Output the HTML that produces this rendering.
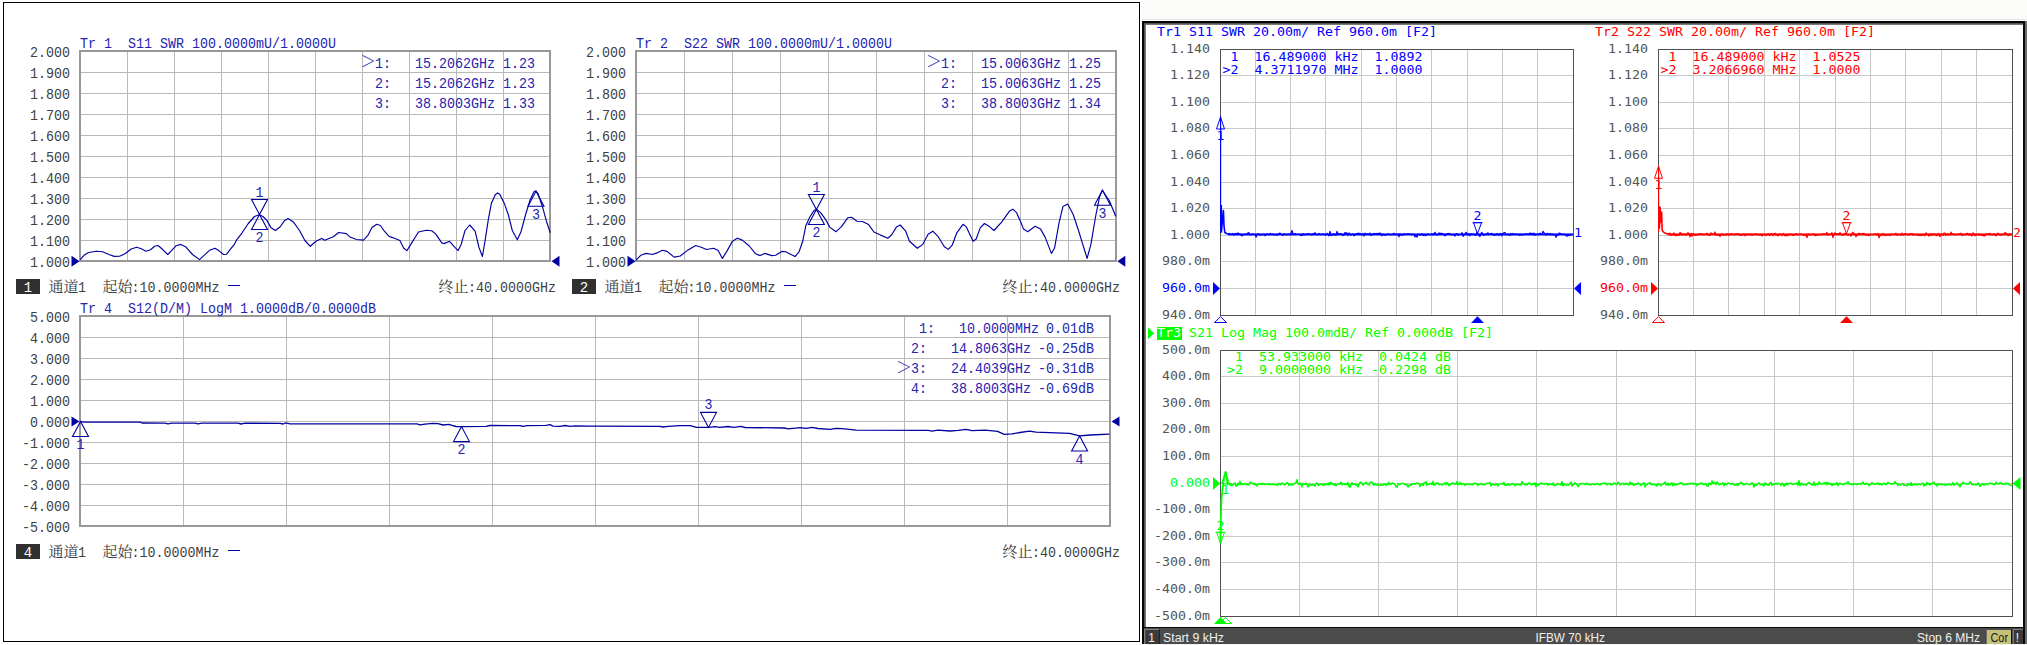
<!DOCTYPE html>
<html lang="zh">
<head>
<meta charset="utf-8">
<title>VNA traces</title>
<style>
html,body{margin:0;padding:0;background:#fff;}
body{width:2027px;height:645px;overflow:hidden;}
svg{display:block;}
text{white-space:pre;}
.lm{font-family:"Liberation Mono",monospace;font-size:15.5px;}
.cj{font-family:"Liberation Serif","Noto Serif CJK SC",serif;font-size:15px;}
.rm{font-family:"DejaVu Sans Mono","Liberation Mono",monospace;font-size:11.8px;}
.sb{font-family:"Liberation Sans",sans-serif;font-size:12px;}
</style>
</head>
<body>
<svg width="2027" height="645" viewBox="0 0 2027 645">
<rect x="0" y="0" width="2027" height="645" fill="#ffffff"/>
<g shape-rendering="crispEdges">
<rect x="3" y="2" width="1137" height="1" fill="#000"/>
<rect x="3" y="641" width="1137" height="1" fill="#000"/>
<rect x="3" y="2" width="1" height="640" fill="#000"/>
<rect x="1139" y="2" width="1" height="640" fill="#000"/>
<rect x="127" y="51" width="1" height="210" fill="#b9b9b9"/>
<rect x="174" y="51" width="1" height="210" fill="#b9b9b9"/>
<rect x="221" y="51" width="1" height="210" fill="#b9b9b9"/>
<rect x="268" y="51" width="1" height="210" fill="#b9b9b9"/>
<rect x="315" y="51" width="1" height="210" fill="#b9b9b9"/>
<rect x="362" y="51" width="1" height="210" fill="#b9b9b9"/>
<rect x="409" y="51" width="1" height="210" fill="#b9b9b9"/>
<rect x="456" y="51" width="1" height="210" fill="#b9b9b9"/>
<rect x="503" y="51" width="1" height="210" fill="#b9b9b9"/>
<rect x="80" y="72" width="470" height="1" fill="#b9b9b9"/>
<rect x="80" y="93" width="470" height="1" fill="#b9b9b9"/>
<rect x="80" y="114" width="470" height="1" fill="#b9b9b9"/>
<rect x="80" y="135" width="470" height="1" fill="#b9b9b9"/>
<rect x="80" y="156" width="470" height="1" fill="#b9b9b9"/>
<rect x="80" y="177" width="470" height="1" fill="#b9b9b9"/>
<rect x="80" y="198" width="470" height="1" fill="#b9b9b9"/>
<rect x="80" y="219" width="470" height="1" fill="#b9b9b9"/>
<rect x="80" y="240" width="470" height="1" fill="#b9b9b9"/>
<rect x="79" y="50" width="472" height="2" fill="#989898"/>
<rect x="79" y="260" width="472" height="2" fill="#989898"/>
<rect x="79" y="50" width="2" height="212" fill="#989898"/>
<rect x="549" y="50" width="2" height="212" fill="#989898"/>
<rect x="684" y="51" width="1" height="210" fill="#b9b9b9"/>
<rect x="732" y="51" width="1" height="210" fill="#b9b9b9"/>
<rect x="780" y="51" width="1" height="210" fill="#b9b9b9"/>
<rect x="828" y="51" width="1" height="210" fill="#b9b9b9"/>
<rect x="876" y="51" width="1" height="210" fill="#b9b9b9"/>
<rect x="924" y="51" width="1" height="210" fill="#b9b9b9"/>
<rect x="972" y="51" width="1" height="210" fill="#b9b9b9"/>
<rect x="1020" y="51" width="1" height="210" fill="#b9b9b9"/>
<rect x="1068" y="51" width="1" height="210" fill="#b9b9b9"/>
<rect x="636" y="72" width="480" height="1" fill="#b9b9b9"/>
<rect x="636" y="93" width="480" height="1" fill="#b9b9b9"/>
<rect x="636" y="114" width="480" height="1" fill="#b9b9b9"/>
<rect x="636" y="135" width="480" height="1" fill="#b9b9b9"/>
<rect x="636" y="156" width="480" height="1" fill="#b9b9b9"/>
<rect x="636" y="177" width="480" height="1" fill="#b9b9b9"/>
<rect x="636" y="198" width="480" height="1" fill="#b9b9b9"/>
<rect x="636" y="219" width="480" height="1" fill="#b9b9b9"/>
<rect x="636" y="240" width="480" height="1" fill="#b9b9b9"/>
<rect x="635" y="50" width="482" height="2" fill="#989898"/>
<rect x="635" y="260" width="482" height="2" fill="#989898"/>
<rect x="635" y="50" width="2" height="212" fill="#989898"/>
<rect x="1115" y="50" width="2" height="212" fill="#989898"/>
<rect x="183" y="316" width="1" height="210" fill="#b9b9b9"/>
<rect x="286" y="316" width="1" height="210" fill="#b9b9b9"/>
<rect x="389" y="316" width="1" height="210" fill="#b9b9b9"/>
<rect x="492" y="316" width="1" height="210" fill="#b9b9b9"/>
<rect x="595" y="316" width="1" height="210" fill="#b9b9b9"/>
<rect x="698" y="316" width="1" height="210" fill="#b9b9b9"/>
<rect x="801" y="316" width="1" height="210" fill="#b9b9b9"/>
<rect x="904" y="316" width="1" height="210" fill="#b9b9b9"/>
<rect x="1007" y="316" width="1" height="210" fill="#b9b9b9"/>
<rect x="80" y="337" width="1030" height="1" fill="#b9b9b9"/>
<rect x="80" y="358" width="1030" height="1" fill="#b9b9b9"/>
<rect x="80" y="379" width="1030" height="1" fill="#b9b9b9"/>
<rect x="80" y="400" width="1030" height="1" fill="#b9b9b9"/>
<rect x="80" y="421" width="1030" height="1" fill="#b9b9b9"/>
<rect x="80" y="442" width="1030" height="1" fill="#b9b9b9"/>
<rect x="80" y="463" width="1030" height="1" fill="#b9b9b9"/>
<rect x="80" y="484" width="1030" height="1" fill="#b9b9b9"/>
<rect x="80" y="505" width="1030" height="1" fill="#b9b9b9"/>
<rect x="79" y="315" width="1032" height="2" fill="#989898"/>
<rect x="79" y="525" width="1032" height="2" fill="#989898"/>
<rect x="79" y="315" width="2" height="212" fill="#989898"/>
<rect x="1109" y="315" width="2" height="212" fill="#989898"/>
<rect x="16" y="279" width="24" height="15" fill="#303030"/>
<rect x="572" y="279" width="24" height="15" fill="#303030"/>
<rect x="16" y="544" width="24" height="15" fill="#303030"/>
</g>
<text class="lm" x="30" y="56.8" fill="#404040" textLength="40" lengthAdjust="spacingAndGlyphs" xml:space="preserve">2.000</text>
<text class="lm" x="586" y="56.8" fill="#404040" textLength="40" lengthAdjust="spacingAndGlyphs" xml:space="preserve">2.000</text>
<text class="lm" x="30" y="77.8" fill="#404040" textLength="40" lengthAdjust="spacingAndGlyphs" xml:space="preserve">1.900</text>
<text class="lm" x="586" y="77.8" fill="#404040" textLength="40" lengthAdjust="spacingAndGlyphs" xml:space="preserve">1.900</text>
<text class="lm" x="30" y="98.8" fill="#404040" textLength="40" lengthAdjust="spacingAndGlyphs" xml:space="preserve">1.800</text>
<text class="lm" x="586" y="98.8" fill="#404040" textLength="40" lengthAdjust="spacingAndGlyphs" xml:space="preserve">1.800</text>
<text class="lm" x="30" y="119.8" fill="#404040" textLength="40" lengthAdjust="spacingAndGlyphs" xml:space="preserve">1.700</text>
<text class="lm" x="586" y="119.8" fill="#404040" textLength="40" lengthAdjust="spacingAndGlyphs" xml:space="preserve">1.700</text>
<text class="lm" x="30" y="140.8" fill="#404040" textLength="40" lengthAdjust="spacingAndGlyphs" xml:space="preserve">1.600</text>
<text class="lm" x="586" y="140.8" fill="#404040" textLength="40" lengthAdjust="spacingAndGlyphs" xml:space="preserve">1.600</text>
<text class="lm" x="30" y="161.8" fill="#404040" textLength="40" lengthAdjust="spacingAndGlyphs" xml:space="preserve">1.500</text>
<text class="lm" x="586" y="161.8" fill="#404040" textLength="40" lengthAdjust="spacingAndGlyphs" xml:space="preserve">1.500</text>
<text class="lm" x="30" y="182.8" fill="#404040" textLength="40" lengthAdjust="spacingAndGlyphs" xml:space="preserve">1.400</text>
<text class="lm" x="586" y="182.8" fill="#404040" textLength="40" lengthAdjust="spacingAndGlyphs" xml:space="preserve">1.400</text>
<text class="lm" x="30" y="203.8" fill="#404040" textLength="40" lengthAdjust="spacingAndGlyphs" xml:space="preserve">1.300</text>
<text class="lm" x="586" y="203.8" fill="#404040" textLength="40" lengthAdjust="spacingAndGlyphs" xml:space="preserve">1.300</text>
<text class="lm" x="30" y="224.8" fill="#404040" textLength="40" lengthAdjust="spacingAndGlyphs" xml:space="preserve">1.200</text>
<text class="lm" x="586" y="224.8" fill="#404040" textLength="40" lengthAdjust="spacingAndGlyphs" xml:space="preserve">1.200</text>
<text class="lm" x="30" y="245.8" fill="#404040" textLength="40" lengthAdjust="spacingAndGlyphs" xml:space="preserve">1.100</text>
<text class="lm" x="586" y="245.8" fill="#404040" textLength="40" lengthAdjust="spacingAndGlyphs" xml:space="preserve">1.100</text>
<text class="lm" x="30" y="266.8" fill="#404040" textLength="40" lengthAdjust="spacingAndGlyphs" xml:space="preserve">1.000</text>
<text class="lm" x="586" y="266.8" fill="#404040" textLength="40" lengthAdjust="spacingAndGlyphs" xml:space="preserve">1.000</text>
<text class="lm" x="30" y="321.8" fill="#404040" textLength="40" lengthAdjust="spacingAndGlyphs" xml:space="preserve">5.000</text>
<text class="lm" x="30" y="342.8" fill="#404040" textLength="40" lengthAdjust="spacingAndGlyphs" xml:space="preserve">4.000</text>
<text class="lm" x="30" y="363.8" fill="#404040" textLength="40" lengthAdjust="spacingAndGlyphs" xml:space="preserve">3.000</text>
<text class="lm" x="30" y="384.8" fill="#404040" textLength="40" lengthAdjust="spacingAndGlyphs" xml:space="preserve">2.000</text>
<text class="lm" x="30" y="405.8" fill="#404040" textLength="40" lengthAdjust="spacingAndGlyphs" xml:space="preserve">1.000</text>
<text class="lm" x="30" y="426.8" fill="#404040" textLength="40" lengthAdjust="spacingAndGlyphs" xml:space="preserve">0.000</text>
<text class="lm" x="22" y="447.8" fill="#404040" textLength="48" lengthAdjust="spacingAndGlyphs" xml:space="preserve">-1.000</text>
<text class="lm" x="22" y="468.8" fill="#404040" textLength="48" lengthAdjust="spacingAndGlyphs" xml:space="preserve">-2.000</text>
<text class="lm" x="22" y="489.8" fill="#404040" textLength="48" lengthAdjust="spacingAndGlyphs" xml:space="preserve">-3.000</text>
<text class="lm" x="22" y="510.8" fill="#404040" textLength="48" lengthAdjust="spacingAndGlyphs" xml:space="preserve">-4.000</text>
<text class="lm" x="22" y="531.8" fill="#404040" textLength="48" lengthAdjust="spacingAndGlyphs" xml:space="preserve">-5.000</text>
<text class="lm" x="80" y="48" fill="#2424b0" textLength="256" lengthAdjust="spacingAndGlyphs" xml:space="preserve">Tr 1  S11 SWR 100.0000mU/1.0000U</text>
<text class="lm" x="636" y="48" fill="#2424b0" textLength="256" lengthAdjust="spacingAndGlyphs" xml:space="preserve">Tr 2  S22 SWR 100.0000mU/1.0000U</text>
<text class="lm" x="80" y="313" fill="#2424b0" textLength="296" lengthAdjust="spacingAndGlyphs" xml:space="preserve">Tr 4  S12(D/M) LogM 1.0000dB/0.0000dB</text>
<text class="lm" x="375" y="67.5" fill="#2424b0" textLength="16" lengthAdjust="spacingAndGlyphs" xml:space="preserve">1:</text>
<text class="lm" x="415" y="67.5" fill="#2424b0" textLength="80" lengthAdjust="spacingAndGlyphs" xml:space="preserve">15.2062GHz</text>
<text class="lm" x="503" y="67.5" fill="#2424b0" textLength="32" lengthAdjust="spacingAndGlyphs" xml:space="preserve">1.23</text>
<text class="lm" x="375" y="87.5" fill="#2424b0" textLength="16" lengthAdjust="spacingAndGlyphs" xml:space="preserve">2:</text>
<text class="lm" x="415" y="87.5" fill="#2424b0" textLength="80" lengthAdjust="spacingAndGlyphs" xml:space="preserve">15.2062GHz</text>
<text class="lm" x="503" y="87.5" fill="#2424b0" textLength="32" lengthAdjust="spacingAndGlyphs" xml:space="preserve">1.23</text>
<text class="lm" x="375" y="107.5" fill="#2424b0" textLength="16" lengthAdjust="spacingAndGlyphs" xml:space="preserve">3:</text>
<text class="lm" x="415" y="107.5" fill="#2424b0" textLength="80" lengthAdjust="spacingAndGlyphs" xml:space="preserve">38.8003GHz</text>
<text class="lm" x="503" y="107.5" fill="#2424b0" textLength="32" lengthAdjust="spacingAndGlyphs" xml:space="preserve">1.33</text>
<text class="cj" x="360.2" y="67" fill="#2424b0" style="font-size:16px">＞</text>
<text class="lm" x="941" y="67.5" fill="#2424b0" textLength="16" lengthAdjust="spacingAndGlyphs" xml:space="preserve">1:</text>
<text class="lm" x="981" y="67.5" fill="#2424b0" textLength="80" lengthAdjust="spacingAndGlyphs" xml:space="preserve">15.0063GHz</text>
<text class="lm" x="1069" y="67.5" fill="#2424b0" textLength="32" lengthAdjust="spacingAndGlyphs" xml:space="preserve">1.25</text>
<text class="lm" x="941" y="87.5" fill="#2424b0" textLength="16" lengthAdjust="spacingAndGlyphs" xml:space="preserve">2:</text>
<text class="lm" x="981" y="87.5" fill="#2424b0" textLength="80" lengthAdjust="spacingAndGlyphs" xml:space="preserve">15.0063GHz</text>
<text class="lm" x="1069" y="87.5" fill="#2424b0" textLength="32" lengthAdjust="spacingAndGlyphs" xml:space="preserve">1.25</text>
<text class="lm" x="941" y="107.5" fill="#2424b0" textLength="16" lengthAdjust="spacingAndGlyphs" xml:space="preserve">3:</text>
<text class="lm" x="981" y="107.5" fill="#2424b0" textLength="80" lengthAdjust="spacingAndGlyphs" xml:space="preserve">38.8003GHz</text>
<text class="lm" x="1069" y="107.5" fill="#2424b0" textLength="32" lengthAdjust="spacingAndGlyphs" xml:space="preserve">1.34</text>
<text class="cj" x="925.9" y="67" fill="#2424b0" style="font-size:16px">＞</text>
<text class="lm" x="919" y="333" fill="#2424b0" textLength="16" lengthAdjust="spacingAndGlyphs" xml:space="preserve">1:</text>
<text class="lm" x="959" y="333" fill="#2424b0" textLength="80" lengthAdjust="spacingAndGlyphs" xml:space="preserve">10.0000MHz</text>
<text class="lm" x="1046" y="333" fill="#2424b0" textLength="48" lengthAdjust="spacingAndGlyphs" xml:space="preserve">0.01dB</text>
<text class="lm" x="911" y="353" fill="#2424b0" textLength="16" lengthAdjust="spacingAndGlyphs" xml:space="preserve">2:</text>
<text class="lm" x="951" y="353" fill="#2424b0" textLength="80" lengthAdjust="spacingAndGlyphs" xml:space="preserve">14.8063GHz</text>
<text class="lm" x="1038" y="353" fill="#2424b0" textLength="56" lengthAdjust="spacingAndGlyphs" xml:space="preserve">-0.25dB</text>
<text class="lm" x="911" y="373" fill="#2424b0" textLength="16" lengthAdjust="spacingAndGlyphs" xml:space="preserve">3:</text>
<text class="lm" x="951" y="373" fill="#2424b0" textLength="80" lengthAdjust="spacingAndGlyphs" xml:space="preserve">24.4039GHz</text>
<text class="lm" x="1038" y="373" fill="#2424b0" textLength="56" lengthAdjust="spacingAndGlyphs" xml:space="preserve">-0.31dB</text>
<text class="lm" x="911" y="393" fill="#2424b0" textLength="16" lengthAdjust="spacingAndGlyphs" xml:space="preserve">4:</text>
<text class="lm" x="951" y="393" fill="#2424b0" textLength="80" lengthAdjust="spacingAndGlyphs" xml:space="preserve">38.8003GHz</text>
<text class="lm" x="1038" y="393" fill="#2424b0" textLength="56" lengthAdjust="spacingAndGlyphs" xml:space="preserve">-0.69dB</text>
<text class="cj" x="896" y="372.5" fill="#2424b0" style="font-size:16px">＞</text>
<text class="lm" x="28" y="291.5" fill="#fff" text-anchor="middle" style="font-size:14px">1</text>
<text class="cj" x="48.5" y="292" fill="#404040">通道</text>
<text class="lm" x="78" y="292" fill="#404040" textLength="8" lengthAdjust="spacingAndGlyphs" xml:space="preserve">1</text>
<text class="cj" x="102.5" y="292" fill="#404040">起始</text>
<text class="lm" x="131.5" y="292" fill="#404040" textLength="88" lengthAdjust="spacingAndGlyphs" xml:space="preserve">:10.0000MHz</text>
<rect x="228" y="285" width="12" height="1" fill="#0000a0" shape-rendering="crispEdges"/>
<text class="cj" x="438.5" y="292" fill="#404040">终止</text>
<text class="lm" x="468" y="292" fill="#404040" textLength="88" lengthAdjust="spacingAndGlyphs" xml:space="preserve">:40.0000GHz</text>
<text class="lm" x="584" y="291.5" fill="#fff" text-anchor="middle" style="font-size:14px">2</text>
<text class="cj" x="604.5" y="292" fill="#404040">通道</text>
<text class="lm" x="634" y="292" fill="#404040" textLength="8" lengthAdjust="spacingAndGlyphs" xml:space="preserve">1</text>
<text class="cj" x="658.5" y="292" fill="#404040">起始</text>
<text class="lm" x="687.5" y="292" fill="#404040" textLength="88" lengthAdjust="spacingAndGlyphs" xml:space="preserve">:10.0000MHz</text>
<rect x="784" y="285" width="12" height="1" fill="#0000a0" shape-rendering="crispEdges"/>
<text class="cj" x="1002.5" y="292" fill="#404040">终止</text>
<text class="lm" x="1032" y="292" fill="#404040" textLength="88" lengthAdjust="spacingAndGlyphs" xml:space="preserve">:40.0000GHz</text>
<text class="lm" x="28" y="556.5" fill="#fff" text-anchor="middle" style="font-size:14px">4</text>
<text class="cj" x="48.5" y="557" fill="#404040">通道</text>
<text class="lm" x="78" y="557" fill="#404040" textLength="8" lengthAdjust="spacingAndGlyphs" xml:space="preserve">1</text>
<text class="cj" x="102.5" y="557" fill="#404040">起始</text>
<text class="lm" x="131.5" y="557" fill="#404040" textLength="88" lengthAdjust="spacingAndGlyphs" xml:space="preserve">:10.0000MHz</text>
<rect x="228" y="550" width="12" height="1" fill="#0000a0" shape-rendering="crispEdges"/>
<text class="cj" x="1002.5" y="557" fill="#404040">终止</text>
<text class="lm" x="1032" y="557" fill="#404040" textLength="88" lengthAdjust="spacingAndGlyphs" xml:space="preserve">:40.0000GHz</text>
<polyline points="80.1,259.9 84.0,255.3 88.6,252.5 96.4,251.2 102.6,251.7 108.8,254.5 114.2,256.4 119.6,256.2 125.0,253.7 131.2,249.0 136.7,247.2 141.3,248.8 146.0,251.2 150.6,249.8 154.5,246.3 158.0,245.5 163.0,249.8 167.7,254.5 171.6,250.6 176.2,245.7 180.9,244.4 185.5,246.7 192.5,254.5 199.5,259.6 204.1,255.3 209.5,250.3 215.0,248.3 218.8,250.6 223.5,254.5 226.6,254.2 230.5,249.1 234.3,244.4 236.7,239.8 242.1,232.8 248.3,223.5 254.5,216.5 259.1,214.7 263.0,216.5 266.9,220.4 270.8,227.4 275.4,230.5 280.0,227.0 284.7,220.4 288.1,218.4 293.3,221.9 299.5,230.5 304.9,240.5 310.3,246.3 316.3,241.0 321.7,238.4 324.8,240.3 333.3,236.7 338.7,232.5 346.4,233.6 349.5,236.7 356.5,239.5 363.5,240.1 368.1,235.1 372.0,227.4 376.7,224.3 380.5,225.5 384.4,231.2 389.1,236.4 394.5,238.2 399.9,240.5 403.8,248.3 406.9,250.6 410.8,244.4 418.5,232.0 426.3,230.2 431.7,230.8 435.6,233.9 441.8,242.9 444.1,243.6 449.5,241.3 454.2,246.7 458.1,250.6 461.2,244.4 465.0,230.5 469.7,225.0 475.1,231.2 479.0,247.5 482.4,256.5 485.2,239.8 488.3,219.6 491.4,203.3 495.3,194.8 497.6,192.9 499.9,194.5 504.6,204.1 508.4,215.0 512.3,230.5 517.3,239.8 520.9,232.0 525.5,215.0 530.2,199.5 534.0,191.7 535.6,190.9 537.9,193.3 542.6,207.2 546.4,221.2 550.3,232.8" fill="none" stroke="#0000a0" stroke-width="1.15" stroke-linejoin="round" />
<polyline points="636.1,260.2 640.7,255.3 646.2,253.4 652.4,254.5 657.0,252.9 662.4,250.3 667.1,251.4 674.1,257.1 680.3,256.0 687.2,250.6 695.8,245.5 701.2,247.2 706.6,249.5 713.6,248.3 718.2,250.6 722.4,258.4 726.8,251.4 732.2,241.6 737.3,238.2 742.3,240.1 749.3,246.0 755.5,253.7 760.1,255.6 764.8,253.4 771.7,255.6 775.6,255.3 781.8,251.4 785.7,251.7 789.6,253.7 795.0,256.5 798.9,252.2 802.7,241.3 805.8,225.8 809.7,217.3 813.6,211.1 816.4,209.2 820.6,212.6 825.2,218.8 829.9,227.4 836.1,231.7 841.5,226.6 847.7,217.8 851.6,217.3 857.0,221.2 862.4,221.5 868.6,224.6 873.9,232.0 880.6,235.1 887.8,238.2 891.7,234.8 896.4,227.1 900.2,225.0 905.7,231.2 909.5,241.3 917.3,248.3 922.7,244.4 928.1,234.3 932.8,231.2 938.2,236.7 944.4,246.7 948.3,249.4 952.2,245.2 956.8,232.8 963.0,224.3 966.1,226.6 973.1,241.3 976.2,239.0 980.1,228.1 984.4,223.5 989.4,226.6 994.0,230.5 1001.8,221.9 1009.5,211.1 1012.9,209.2 1016.5,212.6 1020.4,221.2 1023.5,228.9 1027.8,231.7 1035.1,226.3 1040.5,228.9 1045.2,237.4 1051.4,253.4 1054.5,248.3 1059.1,222.7 1063.0,206.4 1067.7,204.1 1073.1,214.2 1078.5,230.5 1087.1,258.4 1090.9,244.4 1095.6,216.5 1099.5,197.1 1102.2,190.2 1109.5,201.0 1115.7,216.2" fill="none" stroke="#0000a0" stroke-width="1.15" stroke-linejoin="round" />
<polyline points="80.0,421.3 84.0,422.1 140.0,422.2 142.0,423.0 165.0,423.1 168.0,423.8 172.0,423.1 195.0,423.1 198.0,423.9 202.0,423.1 238.0,423.2 241.0,424.0 245.0,423.2 280.0,423.3 283.0,424.0 286.0,422.9 290.0,423.8 417.0,423.9 420.0,424.9 425.0,424.2 433.0,423.4 438.0,423.6 443.0,425.0 449.0,424.3 452.0,425.4 456.0,426.5 461.4,426.6 486.0,426.4 490.0,425.5 520.0,425.6 523.0,426.4 527.0,425.6 546.0,425.3 550.0,424.6 553.0,426.1 560.0,426.3 565.0,425.5 570.0,426.4 575.0,425.8 590.0,426.1 660.0,426.3 663.0,427.0 668.0,426.4 680.0,425.7 690.0,425.6 696.6,427.4 708.5,427.4 715.0,426.6 720.0,427.4 728.0,426.5 734.0,427.4 741.0,426.4 745.0,427.5 784.5,428.0 788.0,428.8 800.0,427.7 806.0,428.4 812.0,427.4 818.0,428.5 830.0,429.3 836.0,428.4 842.0,428.6 856.4,430.1 928.3,430.4 932.0,431.2 938.0,430.2 950.0,431.0 958.0,430.4 966.0,429.4 972.0,430.6 985.0,430.2 997.6,431.4 1004.2,434.3 1012.0,433.9 1020.0,432.5 1029.5,431.1 1036.0,432.2 1069.5,433.3 1079.6,435.9 1090.0,435.0 1109.4,434.1" fill="none" stroke="#0000a0" stroke-width="1.3" stroke-linejoin="round" />
<polygon points="259.5,214.5 251.5,199.5 267.5,199.5" fill="none" stroke="#0000a0" stroke-width="1.1" />
<text class="lm" x="255.5" y="196.5" fill="#2424b0" textLength="8" lengthAdjust="spacingAndGlyphs" xml:space="preserve">1</text>
<polygon points="259.5,214.5 251.5,229.5 267.5,229.5" fill="none" stroke="#0000a0" stroke-width="1.1" />
<text class="lm" x="255.5" y="242.0" fill="#2424b0" textLength="8" lengthAdjust="spacingAndGlyphs" xml:space="preserve">2</text>
<polygon points="536.0,191.2 528.0,206.2 544.0,206.2" fill="none" stroke="#0000a0" stroke-width="1.1" />
<text class="lm" x="532" y="218.7" fill="#2424b0" textLength="8" lengthAdjust="spacingAndGlyphs" xml:space="preserve">3</text>
<polygon points="816.4,209.5 808.4,194.5 824.4,194.5" fill="none" stroke="#0000a0" stroke-width="1.1" />
<text class="lm" x="812.4" y="191.5" fill="#2424b0" textLength="8" lengthAdjust="spacingAndGlyphs" xml:space="preserve">1</text>
<polygon points="816.4,209.5 808.4,224.5 824.4,224.5" fill="none" stroke="#0000a0" stroke-width="1.1" />
<text class="lm" x="812.4" y="237.0" fill="#2424b0" textLength="8" lengthAdjust="spacingAndGlyphs" xml:space="preserve">2</text>
<polygon points="1102.5,190.2 1094.5,205.2 1110.5,205.2" fill="none" stroke="#0000a0" stroke-width="1.1" />
<text class="lm" x="1098.5" y="217.7" fill="#2424b0" textLength="8" lengthAdjust="spacingAndGlyphs" xml:space="preserve">3</text>
<polygon points="80.5,421.5 72.5,436.5 88.5,436.5" fill="none" stroke="#0000a0" stroke-width="1.1" />
<text class="lm" x="76.5" y="449.0" fill="#2424b0" textLength="8" lengthAdjust="spacingAndGlyphs" xml:space="preserve">1</text>
<polygon points="461.5,426.6 453.5,441.6 469.5,441.6" fill="none" stroke="#0000a0" stroke-width="1.1" />
<text class="lm" x="457.5" y="454.1" fill="#2424b0" textLength="8" lengthAdjust="spacingAndGlyphs" xml:space="preserve">2</text>
<polygon points="708.5,427.4 700.5,412.4 716.5,412.4" fill="none" stroke="#0000a0" stroke-width="1.1" />
<text class="lm" x="704.5" y="409.4" fill="#2424b0" textLength="8" lengthAdjust="spacingAndGlyphs" xml:space="preserve">3</text>
<polygon points="1079.6,436.0 1071.6,451.0 1087.6,451.0" fill="none" stroke="#0000a0" stroke-width="1.1" />
<text class="lm" x="1075.6" y="463.5" fill="#2424b0" textLength="8" lengthAdjust="spacingAndGlyphs" xml:space="preserve">4</text>
<polygon points="79.5,261.3 71.5,255.8 71.5,266.8" fill="#0000a0" stroke="none" stroke-width="1" />
<polygon points="551.5,261.3 559.5,255.8 559.5,266.8" fill="#0000a0" stroke="none" stroke-width="1" />
<polygon points="635.5,261.3 627.5,255.8 627.5,266.8" fill="#0000a0" stroke="none" stroke-width="1" />
<polygon points="1117.3,261.3 1125.3,255.8 1125.3,266.8" fill="#0000a0" stroke="none" stroke-width="1" />
<polygon points="79.5,421.5 71.5,416.5 71.5,426.5" fill="#0000a0" stroke="none" stroke-width="1" />
<polygon points="1111.5,421.5 1119.5,416.5 1119.5,426.5" fill="#0000a0" stroke="none" stroke-width="1" />
<g shape-rendering="crispEdges">
<rect x="1142" y="0" width="885" height="21" fill="#fcfcfa"/>
<rect x="1142" y="19" width="885" height="1" fill="#e6e6e6"/>
<rect x="1142" y="20" width="885" height="1" fill="#ffffff"/>
<rect x="1142" y="21" width="885" height="624" fill="#ffffff"/>
<rect x="1142" y="21" width="885" height="2" fill="#050505"/>
<rect x="1144" y="23" width="879" height="1" fill="#555555"/>
<rect x="1144" y="24" width="879" height="1" fill="#787878"/>
<rect x="1142" y="21" width="2" height="623" fill="#050505"/>
<rect x="1144" y="23" width="1" height="604" fill="#555555"/>
<rect x="1145" y="24" width="1" height="603" fill="#787878"/>
<rect x="2023" y="21" width="2" height="623" fill="#0a0a0a"/>
<rect x="2025" y="21" width="2" height="623" fill="#6e6e6e"/>
<rect x="1144" y="627" width="879" height="1" fill="#080808"/>
<rect x="1144" y="628" width="879" height="16" fill="#4b4b4b"/>
<rect x="1142" y="644" width="885" height="1" fill="#f4f4f4"/>
<rect x="1146" y="629" width="13" height="15" fill="#3a3a3a"/>
<rect x="1144" y="629" width="1" height="15" fill="#808080"/>
<rect x="1144" y="629" width="15" height="1" fill="#808080"/>
<rect x="1159" y="629" width="1" height="15" fill="#222"/>
<rect x="1986" y="629" width="1" height="15" fill="#6a6a6a"/>
<rect x="1987" y="630" width="24" height="14" fill="#c6c17a"/>
<rect x="2011" y="629" width="1" height="15" fill="#151515"/>
<rect x="2013" y="629" width="1" height="15" fill="#7a7a7a"/>
<rect x="2013" y="629" width="10" height="1" fill="#7a7a7a"/>
<rect x="2014" y="630" width="9" height="14" fill="#3a3a3a"/>
<rect x="1255" y="49" width="1" height="266" fill="#c9c9c9"/>
<rect x="1290" y="49" width="1" height="266" fill="#c9c9c9"/>
<rect x="1325" y="49" width="1" height="266" fill="#c9c9c9"/>
<rect x="1361" y="49" width="1" height="266" fill="#c9c9c9"/>
<rect x="1396" y="49" width="1" height="266" fill="#c9c9c9"/>
<rect x="1431" y="49" width="1" height="266" fill="#c9c9c9"/>
<rect x="1467" y="49" width="1" height="266" fill="#c9c9c9"/>
<rect x="1502" y="49" width="1" height="266" fill="#c9c9c9"/>
<rect x="1537" y="49" width="1" height="266" fill="#c9c9c9"/>
<rect x="1220" y="75" width="353" height="1" fill="#c9c9c9"/>
<rect x="1220" y="102" width="353" height="1" fill="#c9c9c9"/>
<rect x="1220" y="128" width="353" height="1" fill="#c9c9c9"/>
<rect x="1220" y="155" width="353" height="1" fill="#c9c9c9"/>
<rect x="1220" y="182" width="353" height="1" fill="#c9c9c9"/>
<rect x="1220" y="208" width="353" height="1" fill="#c9c9c9"/>
<rect x="1220" y="235" width="353" height="1" fill="#c9c9c9"/>
<rect x="1220" y="261" width="353" height="1" fill="#c9c9c9"/>
<rect x="1220" y="288" width="353" height="1" fill="#c9c9c9"/>
<rect x="1220" y="49" width="354" height="1" fill="#505050"/>
<rect x="1220" y="315" width="354" height="1" fill="#505050"/>
<rect x="1220" y="49" width="1" height="267" fill="#505050"/>
<rect x="1573" y="49" width="1" height="267" fill="#505050"/>
<rect x="1693" y="49" width="1" height="266" fill="#c9c9c9"/>
<rect x="1728" y="49" width="1" height="266" fill="#c9c9c9"/>
<rect x="1764" y="49" width="1" height="266" fill="#c9c9c9"/>
<rect x="1799" y="49" width="1" height="266" fill="#c9c9c9"/>
<rect x="1835" y="49" width="1" height="266" fill="#c9c9c9"/>
<rect x="1870" y="49" width="1" height="266" fill="#c9c9c9"/>
<rect x="1905" y="49" width="1" height="266" fill="#c9c9c9"/>
<rect x="1941" y="49" width="1" height="266" fill="#c9c9c9"/>
<rect x="1976" y="49" width="1" height="266" fill="#c9c9c9"/>
<rect x="1658" y="75" width="354" height="1" fill="#c9c9c9"/>
<rect x="1658" y="102" width="354" height="1" fill="#c9c9c9"/>
<rect x="1658" y="128" width="354" height="1" fill="#c9c9c9"/>
<rect x="1658" y="155" width="354" height="1" fill="#c9c9c9"/>
<rect x="1658" y="182" width="354" height="1" fill="#c9c9c9"/>
<rect x="1658" y="208" width="354" height="1" fill="#c9c9c9"/>
<rect x="1658" y="235" width="354" height="1" fill="#c9c9c9"/>
<rect x="1658" y="261" width="354" height="1" fill="#c9c9c9"/>
<rect x="1658" y="288" width="354" height="1" fill="#c9c9c9"/>
<rect x="1658" y="49" width="355" height="1" fill="#505050"/>
<rect x="1658" y="315" width="355" height="1" fill="#505050"/>
<rect x="1658" y="49" width="1" height="267" fill="#505050"/>
<rect x="2012" y="49" width="1" height="267" fill="#505050"/>
<rect x="1299" y="350" width="1" height="266" fill="#c9c9c9"/>
<rect x="1378" y="350" width="1" height="266" fill="#c9c9c9"/>
<rect x="1457" y="350" width="1" height="266" fill="#c9c9c9"/>
<rect x="1536" y="350" width="1" height="266" fill="#c9c9c9"/>
<rect x="1616" y="350" width="1" height="266" fill="#c9c9c9"/>
<rect x="1695" y="350" width="1" height="266" fill="#c9c9c9"/>
<rect x="1774" y="350" width="1" height="266" fill="#c9c9c9"/>
<rect x="1853" y="350" width="1" height="266" fill="#c9c9c9"/>
<rect x="1932" y="350" width="1" height="266" fill="#c9c9c9"/>
<rect x="1220" y="376" width="792" height="1" fill="#c9c9c9"/>
<rect x="1220" y="403" width="792" height="1" fill="#c9c9c9"/>
<rect x="1220" y="429" width="792" height="1" fill="#c9c9c9"/>
<rect x="1220" y="456" width="792" height="1" fill="#c9c9c9"/>
<rect x="1220" y="483" width="792" height="1" fill="#c9c9c9"/>
<rect x="1220" y="509" width="792" height="1" fill="#c9c9c9"/>
<rect x="1220" y="536" width="792" height="1" fill="#c9c9c9"/>
<rect x="1220" y="562" width="792" height="1" fill="#c9c9c9"/>
<rect x="1220" y="589" width="792" height="1" fill="#c9c9c9"/>
<rect x="1220" y="350" width="793" height="1" fill="#505050"/>
<rect x="1220" y="616" width="793" height="1" fill="#505050"/>
<rect x="1220" y="350" width="1" height="267" fill="#505050"/>
<rect x="2012" y="350" width="1" height="267" fill="#505050"/>
<rect x="1157" y="327" width="25" height="13" fill="#00ff00"/>
</g>
<text class="sb" x="1148.3" y="642" fill="#f0f0f0">1</text>
<text class="sb" x="1163" y="642" fill="#f0f0f0" textLength="61" lengthAdjust="spacingAndGlyphs">Start 9 kHz</text>
<text class="sb" x="1535.5" y="642" fill="#f0f0f0" textLength="69.5" lengthAdjust="spacingAndGlyphs">IFBW 70 kHz</text>
<text class="sb" x="1917" y="642" fill="#f0f0f0" textLength="63" lengthAdjust="spacingAndGlyphs">Stop 6 MHz</text>
<text class="sb" x="1990.5" y="642" fill="#1a1a1a" textLength="17.5" lengthAdjust="spacingAndGlyphs">Cor</text>
<text class="sb" x="2015.8" y="642" fill="#f0f0f0">!</text>
<text class="rm" x="1157" y="36" fill="#0000ff" textLength="280" lengthAdjust="spacingAndGlyphs" xml:space="preserve">Tr1 S11 SWR 20.00m/ Ref 960.0m [F2]</text>
<text class="rm" x="1595" y="36" fill="#ff0000" textLength="280" lengthAdjust="spacingAndGlyphs" xml:space="preserve">Tr2 S22 SWR 20.00m/ Ref 960.0m [F2]</text>
<text class="rm" x="1157" y="337" fill="#ffffff" textLength="24" lengthAdjust="spacingAndGlyphs" xml:space="preserve">Tr3</text>
<text class="rm" x="1189" y="337" fill="#00ff00" textLength="304" lengthAdjust="spacingAndGlyphs" xml:space="preserve">S21 Log Mag 100.0mdB/ Ref 0.000dB [F2]</text>
<polygon points="1148.0,327.3 1154.0,333.3 1148.0,339.3" fill="#00ff00" stroke="none" stroke-width="1" />
<text class="rm" x="1170" y="52.8" fill="#555555" textLength="40" lengthAdjust="spacingAndGlyphs" xml:space="preserve">1.140</text>
<text class="rm" x="1608" y="52.8" fill="#555555" textLength="40" lengthAdjust="spacingAndGlyphs" xml:space="preserve">1.140</text>
<text class="rm" x="1170" y="78.8" fill="#555555" textLength="40" lengthAdjust="spacingAndGlyphs" xml:space="preserve">1.120</text>
<text class="rm" x="1608" y="78.8" fill="#555555" textLength="40" lengthAdjust="spacingAndGlyphs" xml:space="preserve">1.120</text>
<text class="rm" x="1170" y="105.8" fill="#555555" textLength="40" lengthAdjust="spacingAndGlyphs" xml:space="preserve">1.100</text>
<text class="rm" x="1608" y="105.8" fill="#555555" textLength="40" lengthAdjust="spacingAndGlyphs" xml:space="preserve">1.100</text>
<text class="rm" x="1170" y="131.8" fill="#555555" textLength="40" lengthAdjust="spacingAndGlyphs" xml:space="preserve">1.080</text>
<text class="rm" x="1608" y="131.8" fill="#555555" textLength="40" lengthAdjust="spacingAndGlyphs" xml:space="preserve">1.080</text>
<text class="rm" x="1170" y="158.8" fill="#555555" textLength="40" lengthAdjust="spacingAndGlyphs" xml:space="preserve">1.060</text>
<text class="rm" x="1608" y="158.8" fill="#555555" textLength="40" lengthAdjust="spacingAndGlyphs" xml:space="preserve">1.060</text>
<text class="rm" x="1170" y="185.8" fill="#555555" textLength="40" lengthAdjust="spacingAndGlyphs" xml:space="preserve">1.040</text>
<text class="rm" x="1608" y="185.8" fill="#555555" textLength="40" lengthAdjust="spacingAndGlyphs" xml:space="preserve">1.040</text>
<text class="rm" x="1170" y="211.8" fill="#555555" textLength="40" lengthAdjust="spacingAndGlyphs" xml:space="preserve">1.020</text>
<text class="rm" x="1608" y="211.8" fill="#555555" textLength="40" lengthAdjust="spacingAndGlyphs" xml:space="preserve">1.020</text>
<text class="rm" x="1170" y="238.8" fill="#555555" textLength="40" lengthAdjust="spacingAndGlyphs" xml:space="preserve">1.000</text>
<text class="rm" x="1608" y="238.8" fill="#555555" textLength="40" lengthAdjust="spacingAndGlyphs" xml:space="preserve">1.000</text>
<text class="rm" x="1162" y="264.8" fill="#555555" textLength="48" lengthAdjust="spacingAndGlyphs" xml:space="preserve">980.0m</text>
<text class="rm" x="1600" y="264.8" fill="#555555" textLength="48" lengthAdjust="spacingAndGlyphs" xml:space="preserve">980.0m</text>
<text class="rm" x="1162" y="291.8" fill="#0000ff" textLength="48" lengthAdjust="spacingAndGlyphs" xml:space="preserve">960.0m</text>
<text class="rm" x="1600" y="291.8" fill="#ff0000" textLength="48" lengthAdjust="spacingAndGlyphs" xml:space="preserve">960.0m</text>
<text class="rm" x="1162" y="318.8" fill="#555555" textLength="48" lengthAdjust="spacingAndGlyphs" xml:space="preserve">940.0m</text>
<text class="rm" x="1600" y="318.8" fill="#555555" textLength="48" lengthAdjust="spacingAndGlyphs" xml:space="preserve">940.0m</text>
<text class="rm" x="1162" y="353.8" fill="#555555" textLength="48" lengthAdjust="spacingAndGlyphs" xml:space="preserve">500.0m</text>
<text class="rm" x="1162" y="379.8" fill="#555555" textLength="48" lengthAdjust="spacingAndGlyphs" xml:space="preserve">400.0m</text>
<text class="rm" x="1162" y="406.8" fill="#555555" textLength="48" lengthAdjust="spacingAndGlyphs" xml:space="preserve">300.0m</text>
<text class="rm" x="1162" y="432.8" fill="#555555" textLength="48" lengthAdjust="spacingAndGlyphs" xml:space="preserve">200.0m</text>
<text class="rm" x="1162" y="459.8" fill="#555555" textLength="48" lengthAdjust="spacingAndGlyphs" xml:space="preserve">100.0m</text>
<text class="rm" x="1170" y="486.8" fill="#00ff00" textLength="40" lengthAdjust="spacingAndGlyphs" xml:space="preserve">0.000</text>
<text class="rm" x="1154" y="512.8" fill="#555555" textLength="56" lengthAdjust="spacingAndGlyphs" xml:space="preserve">-100.0m</text>
<text class="rm" x="1154" y="539.8" fill="#555555" textLength="56" lengthAdjust="spacingAndGlyphs" xml:space="preserve">-200.0m</text>
<text class="rm" x="1154" y="565.8" fill="#555555" textLength="56" lengthAdjust="spacingAndGlyphs" xml:space="preserve">-300.0m</text>
<text class="rm" x="1154" y="592.8" fill="#555555" textLength="56" lengthAdjust="spacingAndGlyphs" xml:space="preserve">-400.0m</text>
<text class="rm" x="1154" y="619.8" fill="#555555" textLength="56" lengthAdjust="spacingAndGlyphs" xml:space="preserve">-500.0m</text>
<text class="rm" x="1222.6" y="60.5" fill="#0000ff" textLength="200" lengthAdjust="spacingAndGlyphs" xml:space="preserve"> 1  16.489000 kHz  1.0892</text>
<text class="rm" x="1222.6" y="73.7" fill="#0000ff" textLength="200" lengthAdjust="spacingAndGlyphs" xml:space="preserve">&gt;2  4.3711970 MHz  1.0000</text>
<text class="rm" x="1660.6" y="60.5" fill="#ff0000" textLength="200" lengthAdjust="spacingAndGlyphs" xml:space="preserve"> 1  16.489000 kHz  1.0525</text>
<text class="rm" x="1660.6" y="73.7" fill="#ff0000" textLength="200" lengthAdjust="spacingAndGlyphs" xml:space="preserve">&gt;2  3.2066960 MHz  1.0000</text>
<text class="rm" x="1227" y="361" fill="#00ff00" textLength="224" lengthAdjust="spacingAndGlyphs" xml:space="preserve"> 1  53.933000 kHz  0.0424 dB</text>
<text class="rm" x="1227" y="374.3" fill="#00ff00" textLength="224" lengthAdjust="spacingAndGlyphs" xml:space="preserve">&gt;2  9.0000000 kHz -0.2298 dB</text>
<polyline points="1220.6,233.0 1220.6,116.5" fill="none" stroke="#0000ff" stroke-width="1.2" stroke-linejoin="round" />
<polyline points="1221.3,205.0 1221.4,232.0 1222.3,222.0 1223.4,210.5 1224.0,226.0 1224.8,232.5 1227.0,233.8 1230.0,234.3" fill="none" stroke="#0000ff" stroke-width="1.6" stroke-linejoin="round" />
<rect x="1228" y="233.45" width="345" height="1.9" fill="#0000ff"/>
<polyline points="1228.0,233.5 1229.0,234.7 1230.0,233.5 1231.0,234.4 1232.0,234.7 1233.0,233.5 1234.0,235.2 1235.0,233.8 1236.0,233.3 1237.0,234.7 1238.0,232.8 1239.0,234.2 1240.0,234.0 1241.0,235.2 1242.0,235.9 1243.0,234.5 1244.0,234.7 1245.0,234.3 1246.0,234.2 1247.0,234.4 1248.0,232.8 1249.0,232.7 1250.0,235.0 1251.0,234.6 1252.0,234.0 1253.0,234.2 1254.0,234.4 1255.0,234.5 1256.0,237.1 1257.0,235.2 1258.0,233.7 1259.0,234.1 1260.0,235.1 1261.0,235.1 1262.0,234.5 1263.0,234.9 1264.0,233.9 1265.0,235.8 1266.0,235.0 1267.0,233.6 1268.0,234.5 1269.0,234.9 1270.0,233.3 1271.0,234.7 1272.0,234.1 1273.0,234.1 1274.0,234.9 1275.0,234.9 1276.0,234.5 1277.0,235.4 1278.0,233.8 1279.0,233.8 1280.0,233.1 1281.0,234.4 1282.0,234.5 1283.0,235.5 1284.0,233.9 1285.0,234.1 1286.0,234.9 1287.0,234.6 1288.0,234.0 1289.0,234.0 1290.0,235.0 1291.0,233.1 1292.0,230.5 1293.0,234.0 1294.0,233.8 1295.0,233.5 1296.0,234.5 1297.0,234.4 1298.0,234.5 1299.0,234.4 1300.0,234.3 1301.0,235.7 1302.0,235.3 1303.0,233.7 1304.0,235.0 1305.0,234.1 1306.0,234.9 1307.0,233.9 1308.0,233.5 1309.0,234.0 1310.0,234.2 1311.0,234.2 1312.0,235.2 1313.0,233.6 1314.0,233.7 1315.0,232.7 1316.0,234.5 1317.0,234.5 1318.0,234.6 1319.0,233.4 1320.0,234.1 1321.0,234.7 1322.0,234.4 1323.0,233.8 1324.0,234.4 1325.0,235.1 1326.0,234.8 1327.0,233.3 1328.0,234.7 1329.0,235.9 1330.0,231.4 1331.0,235.6 1332.0,234.8 1333.0,235.1 1334.0,233.6 1335.0,234.9 1336.0,235.5 1337.0,231.4 1338.0,233.6 1339.0,233.7 1340.0,233.9 1341.0,233.7 1342.0,234.8 1343.0,235.5 1344.0,235.0 1345.0,232.5 1346.0,233.4 1347.0,232.9 1348.0,235.6 1349.0,233.1 1350.0,233.8 1351.0,235.3 1352.0,234.4 1353.0,233.7 1354.0,235.8 1355.0,235.2 1356.0,233.5 1357.0,234.7 1358.0,233.1 1359.0,233.8 1360.0,233.4 1361.0,234.6 1362.0,234.8 1363.0,233.5 1364.0,236.0 1365.0,233.2 1366.0,234.6 1367.0,233.8 1368.0,234.2 1369.0,234.6 1370.0,233.0 1371.0,235.4 1372.0,235.1 1373.0,234.0 1374.0,233.4 1375.0,234.3 1376.0,233.5 1377.0,233.9 1378.0,233.2 1379.0,233.9 1380.0,232.9 1381.0,234.3 1382.0,235.8 1383.0,234.0 1384.0,235.0 1385.0,235.1 1386.0,235.1 1387.0,234.6 1388.0,233.7 1389.0,234.3 1390.0,234.8 1391.0,234.5 1392.0,234.9 1393.0,234.1 1394.0,233.2 1395.0,234.9 1396.0,234.2 1397.0,234.8 1398.0,234.0 1399.0,236.7 1400.0,233.8 1401.0,235.2 1402.0,235.0 1403.0,235.0 1404.0,233.7 1405.0,234.3 1406.0,234.0 1407.0,234.3 1408.0,233.8 1409.0,233.7 1410.0,234.7 1411.0,234.0 1412.0,234.9 1413.0,234.0 1414.0,234.9 1415.0,236.9 1416.0,234.5 1417.0,237.2 1418.0,234.3 1419.0,234.0 1420.0,235.1 1421.0,234.9 1422.0,233.7 1423.0,235.2 1424.0,235.7 1425.0,234.4 1426.0,235.6 1427.0,234.6 1428.0,233.9 1429.0,234.5 1430.0,234.7 1431.0,234.9 1432.0,233.7 1433.0,235.2 1434.0,233.7 1435.0,232.3 1436.0,234.7 1437.0,235.1 1438.0,234.5 1439.0,232.8 1440.0,234.0 1441.0,233.1 1442.0,233.7 1443.0,233.9 1444.0,234.3 1445.0,235.9 1446.0,234.7 1447.0,233.7 1448.0,234.0 1449.0,233.3 1450.0,234.4 1451.0,234.1 1452.0,235.1 1453.0,234.4 1454.0,234.6 1455.0,236.1 1456.0,233.9 1457.0,233.6 1458.0,235.4 1459.0,234.4 1460.0,234.5 1461.0,234.4 1462.0,232.6 1463.0,236.4 1464.0,235.1 1465.0,233.9 1466.0,232.3 1467.0,233.5 1468.0,235.2 1469.0,233.4 1470.0,235.8 1471.0,234.1 1472.0,233.7 1473.0,234.8 1474.0,234.1 1475.0,235.2 1476.0,235.3 1477.0,232.3 1478.0,233.9 1479.0,235.8 1480.0,236.4 1481.0,233.5 1482.0,232.5 1483.0,234.7 1484.0,235.4 1485.0,234.0 1486.0,234.8 1487.0,233.5 1488.0,232.8 1489.0,234.5 1490.0,234.0 1491.0,233.7 1492.0,233.3 1493.0,235.0 1494.0,235.5 1495.0,234.1 1496.0,235.4 1497.0,233.6 1498.0,234.3 1499.0,235.5 1500.0,233.6 1501.0,233.5 1502.0,235.9 1503.0,233.2 1504.0,232.7 1505.0,232.5 1506.0,234.7 1507.0,234.8 1508.0,234.0 1509.0,234.9 1510.0,235.3 1511.0,233.5 1512.0,235.0 1513.0,233.4 1514.0,234.1 1515.0,234.7 1516.0,233.9 1517.0,234.1 1518.0,234.8 1519.0,235.3 1520.0,234.0 1521.0,235.2 1522.0,234.7 1523.0,234.9 1524.0,234.2 1525.0,234.2 1526.0,234.2 1527.0,233.9 1528.0,234.3 1529.0,233.7 1530.0,233.0 1531.0,233.7 1532.0,233.2 1533.0,234.9 1534.0,233.1 1535.0,235.4 1536.0,234.0 1537.0,234.9 1538.0,234.0 1539.0,234.7 1540.0,233.1 1541.0,234.1 1542.0,234.5 1543.0,231.3 1544.0,232.7 1545.0,233.6 1546.0,235.2 1547.0,233.4 1548.0,233.8 1549.0,234.8 1550.0,233.4 1551.0,234.9 1552.0,234.0 1553.0,235.1 1554.0,234.2 1555.0,234.7 1556.0,237.3 1557.0,234.8 1558.0,235.1 1559.0,233.1 1560.0,233.3 1561.0,234.2 1562.0,234.1 1563.0,234.6 1564.0,234.1 1565.0,234.7 1566.0,235.8 1567.0,236.2 1568.0,235.3 1569.0,235.7 1570.0,235.2 1571.0,234.5 1572.0,234.6 1573.0,235.0" fill="none" stroke="#0000ff" stroke-width="1.25" stroke-linejoin="round" />
<polyline points="1658.6,232.0 1658.6,166.0" fill="none" stroke="#ff0000" stroke-width="1.2" stroke-linejoin="round" />
<polyline points="1659.3,206.0 1659.5,228.0 1660.1,207.5 1660.8,222.0 1661.6,212.0 1662.2,230.5 1664.0,232.5 1667.0,233.9 1670.0,234.3" fill="none" stroke="#ff0000" stroke-width="1.6" stroke-linejoin="round" />
<rect x="1668" y="233.45" width="344" height="1.9" fill="#ff0000"/>
<polyline points="1668.0,233.6 1669.0,234.5 1670.0,233.1 1671.0,235.3 1672.0,235.2 1673.0,234.1 1674.0,233.0 1675.0,235.4 1676.0,235.6 1677.0,235.2 1678.0,235.2 1679.0,235.3 1680.0,232.5 1681.0,233.2 1682.0,235.0 1683.0,234.0 1684.0,234.9 1685.0,233.9 1686.0,235.5 1687.0,233.7 1688.0,232.8 1689.0,233.8 1690.0,236.9 1691.0,233.3 1692.0,236.3 1693.0,233.7 1694.0,234.8 1695.0,235.4 1696.0,235.1 1697.0,234.6 1698.0,235.0 1699.0,234.3 1700.0,233.6 1701.0,234.4 1702.0,233.8 1703.0,234.9 1704.0,234.3 1705.0,234.3 1706.0,234.5 1707.0,233.2 1708.0,235.0 1709.0,235.2 1710.0,235.5 1711.0,232.8 1712.0,234.3 1713.0,233.8 1714.0,234.3 1715.0,232.0 1716.0,235.1 1717.0,235.1 1718.0,235.2 1719.0,234.6 1720.0,236.4 1721.0,234.8 1722.0,233.7 1723.0,235.5 1724.0,234.5 1725.0,234.8 1726.0,235.3 1727.0,233.9 1728.0,233.9 1729.0,235.5 1730.0,233.9 1731.0,234.3 1732.0,233.6 1733.0,234.7 1734.0,234.3 1735.0,234.7 1736.0,233.8 1737.0,234.3 1738.0,233.5 1739.0,234.3 1740.0,235.5 1741.0,234.4 1742.0,235.4 1743.0,234.6 1744.0,233.7 1745.0,235.8 1746.0,235.0 1747.0,233.9 1748.0,234.8 1749.0,234.0 1750.0,234.9 1751.0,234.0 1752.0,235.5 1753.0,234.4 1754.0,234.1 1755.0,234.7 1756.0,233.7 1757.0,234.6 1758.0,234.8 1759.0,234.4 1760.0,235.2 1761.0,233.9 1762.0,235.9 1763.0,235.0 1764.0,234.2 1765.0,234.7 1766.0,235.6 1767.0,234.8 1768.0,233.7 1769.0,234.9 1770.0,235.6 1771.0,233.5 1772.0,234.1 1773.0,235.8 1774.0,233.9 1775.0,233.2 1776.0,235.0 1777.0,234.2 1778.0,235.9 1779.0,234.6 1780.0,233.8 1781.0,234.7 1782.0,235.5 1783.0,233.4 1784.0,234.5 1785.0,235.8 1786.0,235.6 1787.0,235.3 1788.0,235.7 1789.0,233.9 1790.0,234.9 1791.0,233.9 1792.0,234.9 1793.0,235.3 1794.0,235.2 1795.0,234.8 1796.0,233.7 1797.0,234.0 1798.0,234.8 1799.0,234.5 1800.0,234.0 1801.0,234.3 1802.0,234.1 1803.0,235.1 1804.0,235.2 1805.0,235.3 1806.0,234.8 1807.0,237.7 1808.0,233.9 1809.0,235.0 1810.0,234.9 1811.0,234.4 1812.0,234.6 1813.0,234.2 1814.0,233.8 1815.0,235.8 1816.0,235.1 1817.0,235.2 1818.0,234.8 1819.0,234.6 1820.0,234.5 1821.0,234.8 1822.0,234.6 1823.0,233.7 1824.0,234.0 1825.0,234.1 1826.0,234.1 1827.0,232.4 1828.0,235.2 1829.0,234.2 1830.0,234.0 1831.0,234.2 1832.0,232.7 1833.0,237.5 1834.0,234.4 1835.0,232.7 1836.0,234.0 1837.0,233.9 1838.0,233.6 1839.0,234.3 1840.0,232.7 1841.0,234.2 1842.0,234.9 1843.0,235.2 1844.0,234.6 1845.0,233.2 1846.0,233.9 1847.0,234.4 1848.0,235.3 1849.0,234.6 1850.0,234.7 1851.0,236.1 1852.0,233.3 1853.0,232.3 1854.0,233.6 1855.0,234.0 1856.0,236.8 1857.0,234.9 1858.0,234.6 1859.0,233.2 1860.0,233.7 1861.0,234.4 1862.0,233.9 1863.0,233.6 1864.0,233.3 1865.0,234.6 1866.0,235.2 1867.0,235.2 1868.0,234.4 1869.0,235.6 1870.0,234.8 1871.0,234.9 1872.0,234.6 1873.0,234.5 1874.0,234.3 1875.0,233.9 1876.0,234.4 1877.0,235.2 1878.0,233.4 1879.0,237.8 1880.0,235.5 1881.0,234.4 1882.0,235.6 1883.0,233.3 1884.0,234.8 1885.0,235.6 1886.0,234.8 1887.0,235.2 1888.0,234.6 1889.0,235.2 1890.0,235.5 1891.0,234.4 1892.0,234.2 1893.0,234.6 1894.0,234.4 1895.0,234.5 1896.0,233.2 1897.0,235.4 1898.0,234.1 1899.0,234.7 1900.0,234.5 1901.0,235.3 1902.0,233.1 1903.0,234.8 1904.0,235.2 1905.0,233.7 1906.0,233.9 1907.0,234.4 1908.0,234.6 1909.0,235.1 1910.0,233.5 1911.0,234.3 1912.0,233.4 1913.0,235.4 1914.0,234.0 1915.0,234.5 1916.0,234.9 1917.0,234.8 1918.0,235.1 1919.0,235.2 1920.0,235.7 1921.0,235.0 1922.0,235.3 1923.0,235.2 1924.0,234.3 1925.0,235.7 1926.0,232.8 1927.0,234.5 1928.0,234.7 1929.0,236.0 1930.0,233.7 1931.0,235.3 1932.0,235.5 1933.0,233.7 1934.0,234.8 1935.0,233.9 1936.0,235.5 1937.0,235.5 1938.0,233.4 1939.0,235.3 1940.0,236.7 1941.0,234.2 1942.0,234.3 1943.0,235.4 1944.0,233.1 1945.0,233.2 1946.0,235.5 1947.0,234.0 1948.0,233.8 1949.0,234.8 1950.0,234.9 1951.0,232.1 1952.0,234.3 1953.0,233.9 1954.0,234.4 1955.0,234.9 1956.0,234.5 1957.0,234.4 1958.0,234.4 1959.0,234.1 1960.0,233.9 1961.0,233.2 1962.0,235.7 1963.0,234.6 1964.0,234.7 1965.0,234.8 1966.0,233.9 1967.0,233.2 1968.0,233.7 1969.0,235.2 1970.0,233.7 1971.0,235.2 1972.0,235.9 1973.0,232.9 1974.0,233.9 1975.0,235.7 1976.0,235.3 1977.0,234.6 1978.0,234.0 1979.0,235.0 1980.0,234.4 1981.0,235.4 1982.0,235.0 1983.0,235.7 1984.0,235.8 1985.0,235.9 1986.0,234.4 1987.0,233.8 1988.0,234.0 1989.0,234.0 1990.0,233.3 1991.0,234.6 1992.0,234.3 1993.0,235.0 1994.0,233.6 1995.0,235.1 1996.0,235.8 1997.0,234.4 1998.0,233.2 1999.0,234.1 2000.0,235.1 2001.0,235.2 2002.0,234.7 2003.0,233.9 2004.0,234.6 2005.0,232.4 2006.0,233.2 2007.0,234.0 2008.0,235.7 2009.0,235.4 2010.0,233.5 2011.0,234.8 2012.0,234.3" fill="none" stroke="#ff0000" stroke-width="1.25" stroke-linejoin="round" />
<polyline points="1220.5,543.5 1220.8,520.0 1221.4,500.0 1222.6,488.0 1224.0,478.0 1225.6,471.8 1226.6,478.0 1227.6,484.0 1229.0,483.8 1232.0,484.2" fill="none" stroke="#00ff00" stroke-width="1.8" stroke-linejoin="round" />
<polyline points="1230.0,484.4 1231.0,485.5 1232.0,485.5 1233.0,484.6 1234.0,484.1 1235.0,482.9 1236.0,486.2 1237.0,485.6 1238.0,483.5 1239.0,484.7 1240.0,481.3 1241.0,484.9 1242.0,483.5 1243.0,484.3 1244.0,483.9 1245.0,484.0 1246.0,484.7 1247.0,483.7 1248.0,485.0 1249.0,484.3 1250.0,482.2 1251.0,482.7 1252.0,483.8 1253.0,483.5 1254.0,484.6 1255.0,483.3 1256.0,485.0 1257.0,485.9 1258.0,483.7 1259.0,484.5 1260.0,484.2 1261.0,483.8 1262.0,484.5 1263.0,483.5 1264.0,484.2 1265.0,484.6 1266.0,483.9 1267.0,484.1 1268.0,483.7 1269.0,484.6 1270.0,484.0 1271.0,484.4 1272.0,484.7 1273.0,483.9 1274.0,484.6 1275.0,484.8 1276.0,485.0 1277.0,484.4 1278.0,485.2 1279.0,483.4 1280.0,483.4 1281.0,484.7 1282.0,483.1 1283.0,483.4 1284.0,484.5 1285.0,484.8 1286.0,483.7 1287.0,482.6 1288.0,483.1 1289.0,485.4 1290.0,484.0 1291.0,484.9 1292.0,484.0 1293.0,485.0 1294.0,484.0 1295.0,483.0 1296.0,482.6 1297.0,479.7 1298.0,483.9 1299.0,484.4 1300.0,483.3 1301.0,484.3 1302.0,486.7 1303.0,483.5 1304.0,484.1 1305.0,484.2 1306.0,483.1 1307.0,484.5 1308.0,486.9 1309.0,484.2 1310.0,484.7 1311.0,485.3 1312.0,484.3 1313.0,485.1 1314.0,484.7 1315.0,486.1 1316.0,483.5 1317.0,483.0 1318.0,485.1 1319.0,485.2 1320.0,483.7 1321.0,484.2 1322.0,484.8 1323.0,485.1 1324.0,483.7 1325.0,485.3 1326.0,484.1 1327.0,483.8 1328.0,484.9 1329.0,482.8 1330.0,484.8 1331.0,482.2 1332.0,484.0 1333.0,484.2 1334.0,485.1 1335.0,483.7 1336.0,485.6 1337.0,484.8 1338.0,483.8 1339.0,483.8 1340.0,484.2 1341.0,482.2 1342.0,484.8 1343.0,483.8 1344.0,483.6 1345.0,484.6 1346.0,483.7 1347.0,484.8 1348.0,482.7 1349.0,486.5 1350.0,487.3 1351.0,484.8 1352.0,482.6 1353.0,484.5 1354.0,484.3 1355.0,483.9 1356.0,485.4 1357.0,484.2 1358.0,486.9 1359.0,484.6 1360.0,482.3 1361.0,482.6 1362.0,483.1 1363.0,485.3 1364.0,483.8 1365.0,483.0 1366.0,482.3 1367.0,483.7 1368.0,484.3 1369.0,484.9 1370.0,482.7 1371.0,482.1 1372.0,482.2 1373.0,484.2 1374.0,485.3 1375.0,483.7 1376.0,484.6 1377.0,485.2 1378.0,484.0 1379.0,485.2 1380.0,485.4 1381.0,484.7 1382.0,484.9 1383.0,485.3 1384.0,483.8 1385.0,484.3 1386.0,485.5 1387.0,483.6 1388.0,484.6 1389.0,482.3 1390.0,484.2 1391.0,484.2 1392.0,483.3 1393.0,483.0 1394.0,483.8 1395.0,484.8 1396.0,486.5 1397.0,487.2 1398.0,483.9 1399.0,484.2 1400.0,484.4 1401.0,483.7 1402.0,483.5 1403.0,483.6 1404.0,484.0 1405.0,484.6 1406.0,484.6 1407.0,484.3 1408.0,487.1 1409.0,485.1 1410.0,484.8 1411.0,485.3 1412.0,483.8 1413.0,484.1 1414.0,483.8 1415.0,484.1 1416.0,483.4 1417.0,482.9 1418.0,483.3 1419.0,483.9 1420.0,486.5 1421.0,484.4 1422.0,483.5 1423.0,485.4 1424.0,483.0 1425.0,482.4 1426.0,481.8 1427.0,485.4 1428.0,484.1 1429.0,484.3 1430.0,483.9 1431.0,483.5 1432.0,484.7 1433.0,481.4 1434.0,485.3 1435.0,484.7 1436.0,483.0 1437.0,483.7 1438.0,483.0 1439.0,484.7 1440.0,484.5 1441.0,484.5 1442.0,484.6 1443.0,484.6 1444.0,483.9 1445.0,482.8 1446.0,484.7 1447.0,482.6 1448.0,483.6 1449.0,485.6 1450.0,484.2 1451.0,484.5 1452.0,483.0 1453.0,482.8 1454.0,484.4 1455.0,483.8 1456.0,484.3 1457.0,481.6 1458.0,484.8 1459.0,484.1 1460.0,482.5 1461.0,484.8 1462.0,483.6 1463.0,484.1 1464.0,483.7 1465.0,485.3 1466.0,484.4 1467.0,483.9 1468.0,484.5 1469.0,484.2 1470.0,483.8 1471.0,484.4 1472.0,485.0 1473.0,484.2 1474.0,483.0 1475.0,483.8 1476.0,483.4 1477.0,483.7 1478.0,485.6 1479.0,484.1 1480.0,484.3 1481.0,483.9 1482.0,484.7 1483.0,484.0 1484.0,484.7 1485.0,484.4 1486.0,483.8 1487.0,483.3 1488.0,483.5 1489.0,483.1 1490.0,482.6 1491.0,485.9 1492.0,484.7 1493.0,484.2 1494.0,485.0 1495.0,485.0 1496.0,483.8 1497.0,484.3 1498.0,486.0 1499.0,483.9 1500.0,483.8 1501.0,483.7 1502.0,483.9 1503.0,484.3 1504.0,482.4 1505.0,485.2 1506.0,485.4 1507.0,485.0 1508.0,483.6 1509.0,485.2 1510.0,484.7 1511.0,484.4 1512.0,483.8 1513.0,484.0 1514.0,483.9 1515.0,485.6 1516.0,485.0 1517.0,484.0 1518.0,484.6 1519.0,484.6 1520.0,484.8 1521.0,484.9 1522.0,481.5 1523.0,483.9 1524.0,484.5 1525.0,484.4 1526.0,483.9 1527.0,484.9 1528.0,484.0 1529.0,482.9 1530.0,483.2 1531.0,484.8 1532.0,484.5 1533.0,483.6 1534.0,484.5 1535.0,482.8 1536.0,486.8 1537.0,483.5 1538.0,485.1 1539.0,484.5 1540.0,483.8 1541.0,482.7 1542.0,484.3 1543.0,483.7 1544.0,483.6 1545.0,484.5 1546.0,483.7 1547.0,483.5 1548.0,485.2 1549.0,483.8 1550.0,484.0 1551.0,484.3 1552.0,484.9 1553.0,483.0 1554.0,485.5 1555.0,485.0 1556.0,485.2 1557.0,484.3 1558.0,483.3 1559.0,484.1 1560.0,484.2 1561.0,484.9 1562.0,481.8 1563.0,485.9 1564.0,483.6 1565.0,484.9 1566.0,485.1 1567.0,484.9 1568.0,485.0 1569.0,484.9 1570.0,483.8 1571.0,482.0 1572.0,486.0 1573.0,484.6 1574.0,484.6 1575.0,482.6 1576.0,483.9 1577.0,484.1 1578.0,486.6 1579.0,485.2 1580.0,483.6 1581.0,483.9 1582.0,483.8 1583.0,483.5 1584.0,483.7 1585.0,484.5 1586.0,484.2 1587.0,483.1 1588.0,484.5 1589.0,484.9 1590.0,484.3 1591.0,484.9 1592.0,484.2 1593.0,484.3 1594.0,484.2 1595.0,484.8 1596.0,484.0 1597.0,483.9 1598.0,483.5 1599.0,484.8 1600.0,484.9 1601.0,483.6 1602.0,483.8 1603.0,483.6 1604.0,483.1 1605.0,483.1 1606.0,484.3 1607.0,484.7 1608.0,483.8 1609.0,483.9 1610.0,483.4 1611.0,485.0 1612.0,484.1 1613.0,484.5 1614.0,483.0 1615.0,483.3 1616.0,484.6 1617.0,484.8 1618.0,482.2 1619.0,482.7 1620.0,484.9 1621.0,484.3 1622.0,483.5 1623.0,483.2 1624.0,484.6 1625.0,483.4 1626.0,484.2 1627.0,483.8 1628.0,484.5 1629.0,484.8 1630.0,482.0 1631.0,484.5 1632.0,482.9 1633.0,484.8 1634.0,485.4 1635.0,484.3 1636.0,484.0 1637.0,484.4 1638.0,483.0 1639.0,483.9 1640.0,483.9 1641.0,485.7 1642.0,483.9 1643.0,483.6 1644.0,482.8 1645.0,486.9 1646.0,485.0 1647.0,484.8 1648.0,483.4 1649.0,483.3 1650.0,482.5 1651.0,484.7 1652.0,484.0 1653.0,484.6 1654.0,484.8 1655.0,484.7 1656.0,484.2 1657.0,486.1 1658.0,484.3 1659.0,483.8 1660.0,484.7 1661.0,485.7 1662.0,484.5 1663.0,484.1 1664.0,483.5 1665.0,482.0 1666.0,484.8 1667.0,485.1 1668.0,482.9 1669.0,485.3 1670.0,484.9 1671.0,483.6 1672.0,482.9 1673.0,485.7 1674.0,483.4 1675.0,485.1 1676.0,484.1 1677.0,484.5 1678.0,484.3 1679.0,483.9 1680.0,482.8 1681.0,483.3 1682.0,483.1 1683.0,484.8 1684.0,484.7 1685.0,484.4 1686.0,484.2 1687.0,483.7 1688.0,484.3 1689.0,484.1 1690.0,483.3 1691.0,483.9 1692.0,483.9 1693.0,483.1 1694.0,484.4 1695.0,483.7 1696.0,483.7 1697.0,485.7 1698.0,484.0 1699.0,484.0 1700.0,484.2 1701.0,482.9 1702.0,483.5 1703.0,484.4 1704.0,484.2 1705.0,483.8 1706.0,483.6 1707.0,485.7 1708.0,486.1 1709.0,483.0 1710.0,483.7 1711.0,484.7 1712.0,481.0 1713.0,483.8 1714.0,482.2 1715.0,483.0 1716.0,484.6 1717.0,481.9 1718.0,483.6 1719.0,484.9 1720.0,484.2 1721.0,483.7 1722.0,483.7 1723.0,482.7 1724.0,485.8 1725.0,483.3 1726.0,484.8 1727.0,484.1 1728.0,483.0 1729.0,483.2 1730.0,483.7 1731.0,484.2 1732.0,483.4 1733.0,483.9 1734.0,485.1 1735.0,484.7 1736.0,485.1 1737.0,483.7 1738.0,485.5 1739.0,483.4 1740.0,483.6 1741.0,482.3 1742.0,483.3 1743.0,484.7 1744.0,484.4 1745.0,484.5 1746.0,483.4 1747.0,483.9 1748.0,484.1 1749.0,484.5 1750.0,484.7 1751.0,484.1 1752.0,482.7 1753.0,484.0 1754.0,487.1 1755.0,484.4 1756.0,485.3 1757.0,484.5 1758.0,483.7 1759.0,482.7 1760.0,484.6 1761.0,484.7 1762.0,484.1 1763.0,485.3 1764.0,485.8 1765.0,482.7 1766.0,484.7 1767.0,484.5 1768.0,484.8 1769.0,485.3 1770.0,483.0 1771.0,482.3 1772.0,485.4 1773.0,484.3 1774.0,484.0 1775.0,484.2 1776.0,483.2 1777.0,484.3 1778.0,483.3 1779.0,483.9 1780.0,484.0 1781.0,485.4 1782.0,483.1 1783.0,484.1 1784.0,486.3 1785.0,484.3 1786.0,483.2 1787.0,485.1 1788.0,483.2 1789.0,483.8 1790.0,483.2 1791.0,483.2 1792.0,484.1 1793.0,484.5 1794.0,483.9 1795.0,484.0 1796.0,483.9 1797.0,482.9 1798.0,485.4 1799.0,480.7 1800.0,485.5 1801.0,483.8 1802.0,483.3 1803.0,484.8 1804.0,484.6 1805.0,484.4 1806.0,485.3 1807.0,484.1 1808.0,483.2 1809.0,482.2 1810.0,483.6 1811.0,484.1 1812.0,485.0 1813.0,485.0 1814.0,481.9 1815.0,485.4 1816.0,484.2 1817.0,484.1 1818.0,484.8 1819.0,481.9 1820.0,483.8 1821.0,484.3 1822.0,483.6 1823.0,483.9 1824.0,482.8 1825.0,484.0 1826.0,482.4 1827.0,484.7 1828.0,482.5 1829.0,484.2 1830.0,484.2 1831.0,483.6 1832.0,485.7 1833.0,483.6 1834.0,484.8 1835.0,484.2 1836.0,484.4 1837.0,482.7 1838.0,485.4 1839.0,483.3 1840.0,483.2 1841.0,484.1 1842.0,484.2 1843.0,484.5 1844.0,484.5 1845.0,483.3 1846.0,483.5 1847.0,483.4 1848.0,481.7 1849.0,483.9 1850.0,484.1 1851.0,484.6 1852.0,484.7 1853.0,483.8 1854.0,484.4 1855.0,483.9 1856.0,484.3 1857.0,484.6 1858.0,483.7 1859.0,484.0 1860.0,483.7 1861.0,484.5 1862.0,483.1 1863.0,482.2 1864.0,484.4 1865.0,484.3 1866.0,483.3 1867.0,484.2 1868.0,484.1 1869.0,485.5 1870.0,484.4 1871.0,484.5 1872.0,482.6 1873.0,483.9 1874.0,483.7 1875.0,484.4 1876.0,483.9 1877.0,483.9 1878.0,482.9 1879.0,484.6 1880.0,483.6 1881.0,484.7 1882.0,484.7 1883.0,483.6 1884.0,483.2 1885.0,484.0 1886.0,484.7 1887.0,483.5 1888.0,482.3 1889.0,483.6 1890.0,483.8 1891.0,484.0 1892.0,483.8 1893.0,483.9 1894.0,483.6 1895.0,481.6 1896.0,483.8 1897.0,483.5 1898.0,485.3 1899.0,484.2 1900.0,485.0 1901.0,484.9 1902.0,483.8 1903.0,483.6 1904.0,485.3 1905.0,484.9 1906.0,485.2 1907.0,485.8 1908.0,483.8 1909.0,484.5 1910.0,485.2 1911.0,482.8 1912.0,485.5 1913.0,484.1 1914.0,484.7 1915.0,484.4 1916.0,484.0 1917.0,485.0 1918.0,484.7 1919.0,483.9 1920.0,484.4 1921.0,484.8 1922.0,483.7 1923.0,483.1 1924.0,486.0 1925.0,484.3 1926.0,485.0 1927.0,482.4 1928.0,484.3 1929.0,483.4 1930.0,485.0 1931.0,483.5 1932.0,483.6 1933.0,483.4 1934.0,482.4 1935.0,484.4 1936.0,484.3 1937.0,486.0 1938.0,483.6 1939.0,484.6 1940.0,484.4 1941.0,483.8 1942.0,484.8 1943.0,484.6 1944.0,484.1 1945.0,485.3 1946.0,485.2 1947.0,484.5 1948.0,484.7 1949.0,484.1 1950.0,484.3 1951.0,485.0 1952.0,484.6 1953.0,482.6 1954.0,485.1 1955.0,484.5 1956.0,483.8 1957.0,482.9 1958.0,484.8 1959.0,484.6 1960.0,486.9 1961.0,484.2 1962.0,483.9 1963.0,482.2 1964.0,483.5 1965.0,483.4 1966.0,483.9 1967.0,484.1 1968.0,483.4 1969.0,484.0 1970.0,481.9 1971.0,482.7 1972.0,484.8 1973.0,484.6 1974.0,484.4 1975.0,484.9 1976.0,484.6 1977.0,484.8 1978.0,482.9 1979.0,484.3 1980.0,486.3 1981.0,484.5 1982.0,484.5 1983.0,484.0 1984.0,485.3 1985.0,484.0 1986.0,483.9 1987.0,484.6 1988.0,484.0 1989.0,483.3 1990.0,483.2 1991.0,483.4 1992.0,483.4 1993.0,484.3 1994.0,484.3 1995.0,484.7 1996.0,482.3 1997.0,483.6 1998.0,484.2 1999.0,484.0 2000.0,482.8 2001.0,483.2 2002.0,484.3 2003.0,483.5 2004.0,484.3 2005.0,484.2 2006.0,482.9 2007.0,483.8 2008.0,483.7 2009.0,484.6 2010.0,485.1 2011.0,485.7 2012.0,484.7" fill="none" stroke="#00ff00" stroke-width="1.55" stroke-linejoin="round" />
<polygon points="1220.5,117.0 1216.5,129.0 1224.5,129.0" fill="none" stroke="#0000ff" stroke-width="1" />
<text class="rm" x="1216.5" y="139.5" fill="#0000ff" textLength="8" lengthAdjust="spacingAndGlyphs" xml:space="preserve">1</text>
<polygon points="1477.5,233.7 1473.5,222.7 1481.5,222.7" fill="none" stroke="#0000ff" stroke-width="1" />
<line x1="1472.5" y1="222.7" x2="1482.5" y2="222.7" stroke="#0000ff" stroke-width="1"/>
<text class="rm" x="1473.5" y="219.89999999999998" fill="#0000ff" textLength="8" lengthAdjust="spacingAndGlyphs" xml:space="preserve">2</text>
<polygon points="1658.5,166.3 1654.5,178.3 1662.5,178.3" fill="none" stroke="#ff0000" stroke-width="1" />
<text class="rm" x="1654.5" y="188.8" fill="#ff0000" textLength="8" lengthAdjust="spacingAndGlyphs" xml:space="preserve">1</text>
<polygon points="1846.5,233.7 1842.5,222.7 1850.5,222.7" fill="none" stroke="#ff0000" stroke-width="1" />
<line x1="1841.5" y1="222.7" x2="1851.5" y2="222.7" stroke="#ff0000" stroke-width="1"/>
<text class="rm" x="1842.5" y="219.89999999999998" fill="#ff0000" textLength="8" lengthAdjust="spacingAndGlyphs" xml:space="preserve">2</text>
<polygon points="1225.5,471.8 1221.5,483.8 1229.5,483.8" fill="none" stroke="#00ff00" stroke-width="1" />
<text class="rm" x="1221.5" y="494.3" fill="#00ff00" textLength="8" lengthAdjust="spacingAndGlyphs" xml:space="preserve">1</text>
<polygon points="1220.5,543.3 1216.5,532.3 1224.5,532.3" fill="none" stroke="#00ff00" stroke-width="1" />
<line x1="1215.5" y1="532.3" x2="1225.5" y2="532.3" stroke="#00ff00" stroke-width="1"/>
<text class="rm" x="1216.5" y="529.5" fill="#00ff00" textLength="8" lengthAdjust="spacingAndGlyphs" xml:space="preserve">2</text>
<text class="rm" x="1574" y="236.8" fill="#0000ff" textLength="8" lengthAdjust="spacingAndGlyphs" xml:space="preserve">1</text>
<text class="rm" x="2013" y="236.8" fill="#ff0000" textLength="8" lengthAdjust="spacingAndGlyphs" xml:space="preserve">2</text>
<polygon points="1220.0,288.5 1213.0,282.0 1213.0,295.0" fill="#0000ff" stroke="none" stroke-width="1" />
<polygon points="1574.0,288.5 1581.0,282.0 1581.0,295.0" fill="#0000ff" stroke="none" stroke-width="1" />
<polygon points="1658.0,288.5 1651.0,282.0 1651.0,295.0" fill="#ff0000" stroke="none" stroke-width="1" />
<polygon points="2013.0,288.5 2020.0,282.0 2020.0,295.0" fill="#ff0000" stroke="none" stroke-width="1" />
<polygon points="1220.0,483.5 1213.0,477.0 1213.0,490.0" fill="#00ff00" stroke="none" stroke-width="1" />
<polygon points="2012.5,483.5 2020.5,477.0 2020.5,490.0" fill="#00ff00" stroke="none" stroke-width="1" />
<polygon points="1220.5,316.7 1214.5,322.5 1226.5,322.5" fill="#fff" stroke="#0000ff" stroke-width="1" />
<polygon points="1477.5,316.2 1471.0,323.0 1484.0,323.0" fill="#0000ff" stroke="none" stroke-width="1" />
<polygon points="1658.5,316.7 1652.5,322.5 1664.5,322.5" fill="#fff" stroke="#ff0000" stroke-width="1" />
<polygon points="1846.5,316.2 1840.0,323.0 1853.0,323.0" fill="#ff0000" stroke="none" stroke-width="1" />
<polygon points="1225.5,617.5 1219.5,623.5 1231.5,623.5" fill="#fff" stroke="#00ff00" stroke-width="1" />
<polygon points="1220.5,617.0 1214.0,624.0 1227.0,624.0" fill="#00ff00" stroke="none" stroke-width="1" />
</svg>
</body>
</html>
